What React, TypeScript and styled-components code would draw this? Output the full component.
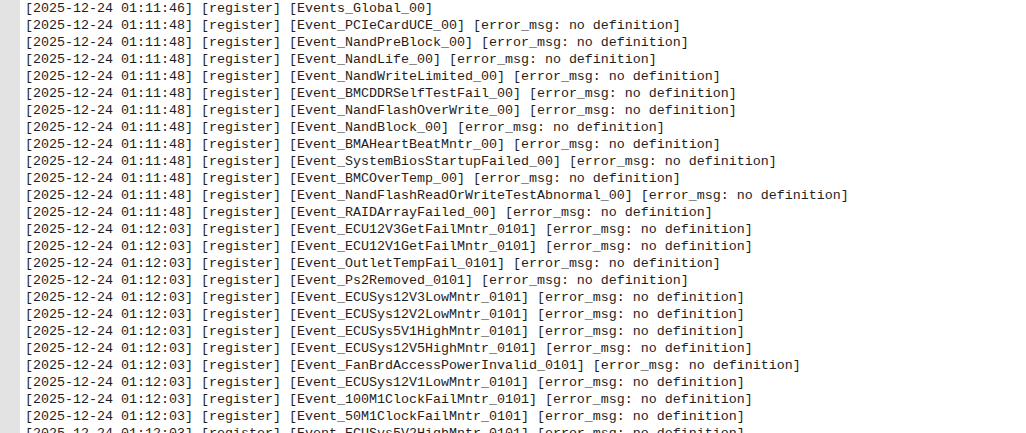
import React from "react";
import styled, { createGlobalStyle } from "styled-components";

const Global = createGlobalStyle`
  html, body { margin: 0; padding: 0; background: #ffffff; overflow: hidden; }
`;

const Viewer = styled.div`
  display: flex;
  width: 1026px;
  height: 433px;
  overflow: hidden;
  background: #ffffff;
`;

const Gutter = styled.div`
  flex: 0 0 20px;
  background: #e3e3e3;
`;

const LogBody = styled.pre`
  margin: 0;
  padding: 0 0 0 5px;
  font-family: "Liberation Mono", "Courier New", monospace;
  font-size: 13.33px;
  line-height: 17px;
  color: #1e1e1e;
  white-space: pre;
`;

const Line = styled.div`
  height: 17px;
`;

const entries: [string, string, boolean][] = [
  ["01:11:46", "Events_Global_00", false],
  ["01:11:48", "Event_PCIeCardUCE_00", true],
  ["01:11:48", "Event_NandPreBlock_00", true],
  ["01:11:48", "Event_NandLife_00", true],
  ["01:11:48", "Event_NandWriteLimited_00", true],
  ["01:11:48", "Event_BMCDDRSelfTestFail_00", true],
  ["01:11:48", "Event_NandFlashOverWrite_00", true],
  ["01:11:48", "Event_NandBlock_00", true],
  ["01:11:48", "Event_BMAHeartBeatMntr_00", true],
  ["01:11:48", "Event_SystemBiosStartupFailed_00", true],
  ["01:11:48", "Event_BMCOverTemp_00", true],
  ["01:11:48", "Event_NandFlashReadOrWriteTestAbnormal_00", true],
  ["01:11:48", "Event_RAIDArrayFailed_00", true],
  ["01:12:03", "Event_ECU12V3GetFailMntr_0101", true],
  ["01:12:03", "Event_ECU12V1GetFailMntr_0101", true],
  ["01:12:03", "Event_OutletTempFail_0101", true],
  ["01:12:03", "Event_Ps2Removed_0101", true],
  ["01:12:03", "Event_ECUSys12V3LowMntr_0101", true],
  ["01:12:03", "Event_ECUSys12V2LowMntr_0101", true],
  ["01:12:03", "Event_ECUSys5V1HighMntr_0101", true],
  ["01:12:03", "Event_ECUSys12V5HighMntr_0101", true],
  ["01:12:03", "Event_FanBrdAccessPowerInvalid_0101", true],
  ["01:12:03", "Event_ECUSys12V1LowMntr_0101", true],
  ["01:12:03", "Event_100M1ClockFailMntr_0101", true],
  ["01:12:03", "Event_50M1ClockFailMntr_0101", true],
  ["01:12:03", "Event_ECUSys5V2HighMntr_0101", true],
];

export default function App() {
  return (
    <>
      <Global />
      <Viewer>
        <Gutter />
        <LogBody>
          {entries.map(([t, ev, err], i) => (
            <Line key={i}>
              {`[2025-12-24 ${t}] [register] [${ev}]${err ? " [error_msg: no definition]" : ""}`}
            </Line>
          ))}
        </LogBody>
      </Viewer>
    </>
  );
}
